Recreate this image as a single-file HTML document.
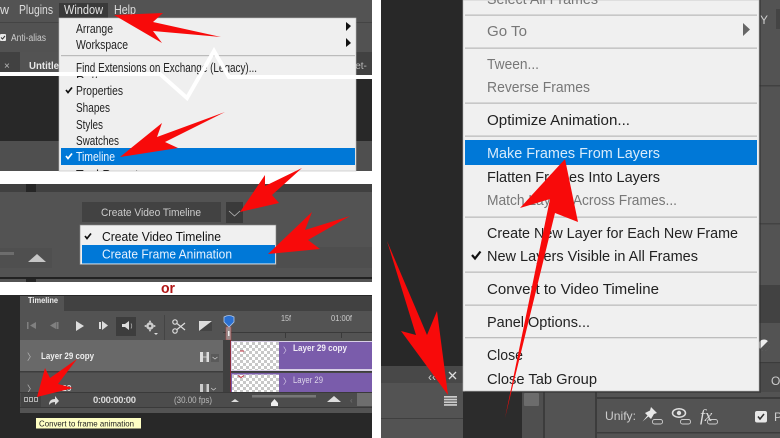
<!DOCTYPE html>
<html><head><meta charset="utf-8"><style>
html,body{margin:0;padding:0;background:#fff;width:780px;height:438px;overflow:hidden}
svg{display:block;filter:blur(.3px)}
text{font-family:"Liberation Sans",sans-serif}
</style></head><body>
<svg width="780" height="438" viewBox="0 0 780 438" xmlns="http://www.w3.org/2000/svg">
<defs>
<pattern id="ck" width="6" height="6" patternUnits="userSpaceOnUse"><rect width="6" height="6" fill="#fff"/><rect width="3" height="3" fill="#c8c8c8"/><rect x="3" y="3" width="3" height="3" fill="#c8c8c8"/></pattern>
<clipPath id="pat"><rect x="59" y="72" width="297" height="6"/></clipPath>
<clipPath id="tool"><rect x="59" y="165" width="297" height="6"/></clipPath>
</defs>
<rect width="780" height="438" fill="#fff"/>

<!-- TOP LEFT PANEL -->
<rect x="0" y="0" width="372" height="22" fill="#535353"/>
<rect x="0" y="22" width="372" height="30" fill="#525252"/>
<rect x="0" y="22" width="372" height="1" fill="#444"/>
<rect x="0" y="52" width="372" height="24" fill="#414141"/>
<rect x="20" y="52" width="39" height="24" fill="#535353"/>
<rect x="0" y="76" width="372" height="65" fill="#282828"/>
<rect x="0" y="141" width="372" height="30" fill="#4f4f4f"/>
<text x="0" y="14" font-size="12.5" fill="#ddd">w</text>
<text x="19" y="14" font-size="12.5" fill="#ddd" textLength="34" lengthAdjust="spacingAndGlyphs">Plugins</text>
<rect x="59" y="3" width="49" height="15" fill="#3a3a3a"/>
<text x="64" y="14" font-size="12.5" fill="#e4e4e4" textLength="39" lengthAdjust="spacingAndGlyphs">Window</text>
<text x="114" y="14" font-size="12.5" fill="#ddd" textLength="22" lengthAdjust="spacingAndGlyphs">Help</text>
<rect x="0" y="34" width="6" height="7" rx="1" fill="#e8e8e8"/>
<path d="M1 37.500 l1.500 1.500 l2.500-3" fill="none" stroke="#333" stroke-width="1"/>
<text x="11" y="41" font-size="10" fill="#ccc" textLength="35" lengthAdjust="spacingAndGlyphs">Anti-alias</text>
<text x="4" y="69" font-size="10" fill="#bbb">×</text>
<text x="29" y="69" font-size="10.5" font-weight="bold" fill="#e8e8e8" textLength="30" lengthAdjust="spacingAndGlyphs">Untitle</text>
<text x="353" y="69" font-size="10" fill="#bbb">let-</text>

<rect x="59" y="18" width="297" height="153" fill="#efefef"/>
<rect x="59" y="18" width="297" height="153" fill="none" stroke="#bbb" stroke-width=".6"/>
<g font-size="12.5" fill="#222">
<text x="76" y="33" textLength="37" lengthAdjust="spacingAndGlyphs">Arrange</text>
<text x="76" y="49" textLength="52" lengthAdjust="spacingAndGlyphs">Workspace</text>
<text x="76" y="72" textLength="181" lengthAdjust="spacingAndGlyphs">Find Extensions on Exchange (Legacy)...</text>
<text x="76" y="85" clip-path="url(#pat)">Patterns</text>
<text x="76" y="95" textLength="47" lengthAdjust="spacingAndGlyphs">Properties</text>
<text x="76" y="112" textLength="34" lengthAdjust="spacingAndGlyphs">Shapes</text>
<text x="76" y="129" textLength="27" lengthAdjust="spacingAndGlyphs">Styles</text>
<text x="76" y="145" textLength="43" lengthAdjust="spacingAndGlyphs">Swatches</text>
<text x="76" y="179" clip-path="url(#tool)">Tool Presets</text>
</g>
<polygon points="346,22 351,26 346,31" fill="#111"/>
<polygon points="346,38 351,43 346,47" fill="#111"/>
<rect x="61" y="55" width="294" height="1.2" fill="#bbb"/>
<rect x="61" y="148" width="294" height="17" fill="#0078d7"/>
<text x="76" y="161" font-size="12.5" fill="#eaf4ff" textLength="39" lengthAdjust="spacingAndGlyphs">Timeline</text>
<path d="M66 90 l2 2.5 l4-5" fill="none" stroke="#111" stroke-width="1.7"/>
<path d="M66 156 l2 2.5 l4-5" fill="none" stroke="#fff" stroke-width="1.7"/>

<!-- zigzag tear -->
<polyline points="0,74 160,74 187,98 214,51 229,77 372,77" fill="none" stroke="#fff" stroke-width="4"/>

<!-- MIDDLE LEFT PANEL -->
<rect x="0" y="184" width="372" height="98" fill="#535353"/>
<rect x="0" y="184" width="372" height="8" fill="#404040"/>
<rect x="26" y="184" width="10" height="8" fill="#262626"/>
<rect x="82" y="202" width="139" height="20" fill="#424242"/>
<text x="101" y="216" font-size="11" fill="#ccc" textLength="100" lengthAdjust="spacingAndGlyphs">Create Video Timeline</text>
<rect x="226" y="202" width="17" height="21" fill="#3a3a3a"/>
<path d="M229 211 l5.500 5 l5.500-5" fill="none" stroke="#bbb" stroke-width=".8"/>
<rect x="0" y="248" width="52" height="20" fill="#4f4f4f"/>
<rect x="276" y="247" width="96" height="21" fill="#4e4e4e"/>
<rect x="0" y="252" width="14" height="3" fill="#6d6d6d"/>
<polygon points="28,262 37,254 46,262" fill="#c6c6c6"/>
<rect x="0" y="277" width="372" height="2" fill="#222"/>
<rect x="26" y="279" width="10" height="3" fill="#262626"/>
<rect x="80" y="225" width="196" height="39.500" fill="#f0f0f0" stroke="#888" stroke-width=".6"/>
<rect x="82" y="245" width="193" height="18.500" fill="#0078d7"/>
<path d="M85 236 l2 2.500 l4-5" fill="none" stroke="#111" stroke-width="1.700"/>
<text x="102" y="241" font-size="12.5" fill="#111" textLength="119" lengthAdjust="spacingAndGlyphs">Create Video Timeline</text>
<text x="102" y="258.500" font-size="12.5" fill="#e6f2ff" textLength="130" lengthAdjust="spacingAndGlyphs">Create Frame Animation</text>

<text x="161" y="293" font-size="15" font-weight="bold" fill="#b01515" textLength="14" lengthAdjust="spacingAndGlyphs">or</text>

<!-- BOTTOM LEFT PANEL -->
<rect x="0" y="295" width="372" height="143" fill="#282828"/>
<rect x="20" y="296" width="352" height="117" fill="#535353"/>
<rect x="64" y="296" width="308" height="15" fill="#414141"/>
<text x="28" y="303" font-size="8" font-weight="bold" fill="#eee" textLength="30" lengthAdjust="spacingAndGlyphs">Timeline</text>
<rect x="116" y="317" width="20" height="19" fill="#3d3d3d"/>
<g fill="#808080">
<rect x="27" y="322" width="1.500" height="7"/><polygon points="36,322 30,325.500 36,329"/>
<polygon points="56,322 50,325.500 56,329"/><rect x="56.500" y="322" width="2" height="7"/>
</g>
<polygon points="76,321 84,326 76,331" fill="#ddd"/>
<rect x="99" y="322" width="2" height="7" fill="#ddd"/><polygon points="102,321 108,325.500 102,330" fill="#ddd"/>
<polygon points="122,324 125,324 129,321 129,330 125,327 122,327" fill="#ddd"/>
<path d="M131 323.500 q1.500 2.500 0 5" fill="none" stroke="#aaa" stroke-width=".8"/>
<circle cx="150" cy="326" r="3.800" fill="#ccc"/><circle cx="150" cy="326" r="1.300" fill="#535353"/>
<circle cx="150" cy="321.500" r="1" fill="#ccc"/><circle cx="150" cy="330.500" r="1" fill="#ccc"/><circle cx="145.500" cy="326" r="1" fill="#ccc"/><circle cx="154.500" cy="326" r="1" fill="#ccc"/>
<polygon points="154,333 158,333 156,335" fill="#ddd"/>
<rect x="164" y="315" width="1" height="25" fill="#444"/>
<g fill="none" stroke="#ddd" stroke-width="1.200"><circle cx="175" cy="322" r="2.200"/><circle cx="175" cy="331" r="2.200"/><path d="M177 323.500 L185 330 M177 329.500 L185 323"/></g>
<rect x="199" y="321" width="13" height="10" fill="#ddd"/><polygon points="212,321 212,331 199,331" fill="#444"/>
<!-- ruler -->
<rect x="223" y="332" width="149" height="1" fill="#3a3a3a"/>
<rect x="285" y="332" width="1" height="6" fill="#3a3a3a"/><rect x="341" y="332" width="1" height="6" fill="#3a3a3a"/>
<text x="281" y="321" font-size="8" fill="#ccc" textLength="10" lengthAdjust="spacingAndGlyphs">15f</text>
<text x="331" y="321" font-size="8" fill="#ccc" textLength="21" lengthAdjust="spacingAndGlyphs">01:00f</text>
<rect x="226" y="327" width="5" height="13" fill="#9a8a8a" stroke="#c04a4a" stroke-width=".5"/>
<rect x="228" y="331" width="1.500" height="5" fill="#eee"/>
<path d="M224 317 q5-3 10 0 v5 l-5 5 l-5-5 z" fill="#2a6fd0" stroke="#b0c8ea" stroke-width=".8"/>
<!-- layer rows -->
<rect x="20" y="340" width="203" height="31" fill="#696969"/>
<rect x="20" y="371" width="352" height="21" fill="#535353"/>
<rect x="20" y="371" width="352" height="1.500" fill="#3d3d3d"/>
<rect x="223" y="340" width="7" height="52" fill="#404040"/>
<rect x="230" y="340" width="1.200" height="52" fill="#8a2a3a"/>
<text x="27" y="360" font-size="9" fill="#bbb">〉</text>
<text x="41" y="359" font-size="9.500" font-weight="bold" fill="#eee" textLength="53" lengthAdjust="spacingAndGlyphs">Layer 29 copy</text>
<text x="27" y="392" font-size="9" fill="#bbb">〉</text>
<text x="62" y="391" font-size="8.500" font-weight="bold" fill="#ddd">29</text>
<rect x="200" y="352" width="9" height="10" fill="#ddd"/><rect x="203" y="352" width="3.500" height="10" fill="#777"/><path d="M203 357h3.500" stroke="#ddd" stroke-width=".8"/>
<rect x="211" y="354" width="8" height="8" fill="#5a5a5a"/><path d="M212.500 357 l2.500 2 l2.500-2" fill="none" stroke="#ccc" stroke-width=".7"/>
<rect x="200" y="384" width="9" height="8" fill="#ccc"/><rect x="203" y="384" width="3.500" height="8" fill="#666"/>
<path d="M211 388 l2.500 2 l2.500-2" fill="none" stroke="#ccc" stroke-width=".7"/>
<!-- clips -->
<rect x="231" y="341" width="141" height="30" fill="#d8cfe6"/>
<rect x="232" y="342" width="47" height="28" fill="url(#ck)"/>
<rect x="279" y="342" width="93" height="27" fill="#7a5cab"/>
<path d="M240 351 h4" stroke="#c03040" stroke-width="1"/>
<text x="283" y="353" font-size="8" fill="#d8d0e8">〉</text>
<text x="293" y="351" font-size="9.500" font-weight="bold" fill="#f0ecf6" textLength="54" lengthAdjust="spacingAndGlyphs">Layer 29 copy</text>
<rect x="231" y="373" width="141" height="19" fill="#7a5cab"/>
<rect x="232" y="374.500" width="47" height="17.500" fill="url(#ck)"/>
<path d="M238 375.500 l3 2 l3-2" fill="none" stroke="#c03040" stroke-width="1"/>
<text x="283" y="384" font-size="8" fill="#d8d0e8">〉</text>
<text x="293" y="383" font-size="9" fill="#ddd6ea" textLength="30" lengthAdjust="spacingAndGlyphs">Layer 29</text>
<!-- bottom bar -->
<rect x="20" y="392" width="352" height="15" fill="#4c4c4c"/>
<rect x="20" y="392" width="352" height="1" fill="#3a3a3a"/><rect x="20" y="407" width="352" height="1" fill="#3a3a3a"/>
<rect x="21" y="393" width="20" height="14" fill="#424242"/>
<g fill="none" stroke="#c8c8c8" stroke-width=".8"><rect x="24.500" y="397.500" width="3" height="4"/><rect x="29.500" y="397.500" width="3" height="4"/><rect x="34.500" y="397.500" width="3" height="4"/></g>
<path d="M49 405 q0-6 6-6 v-3 l4 5 l-4 4 v-3 q-4 0-6 3z" fill="#ddd"/>
<text x="93" y="403" font-size="9.500" font-weight="bold" fill="#ddd" textLength="43" lengthAdjust="spacing">0:00:00:00</text>
<text x="174" y="403" font-size="9.500" fill="#bbb" textLength="38" lengthAdjust="spacingAndGlyphs">(30.00 fps)</text>
<polygon points="231,402 235,399 239,402" fill="#ddd"/>
<rect x="252" y="395" width="64" height="2.500" fill="#777"/>
<polygon points="274.500,399 278,403 278,406 271,406 271,403" fill="#eee"/>
<polygon points="327,402 334,396 341,402" fill="#ddd"/>
<text x="350" y="403" font-size="8" fill="#777">‹</text>
<rect x="357" y="393" width="15" height="13" fill="#6e6e6e"/>
<!-- tooltip -->
<rect x="36" y="418" width="105" height="10.500" fill="#ffffc4"/>
<text x="39" y="426.500" font-size="8.500" fill="#222" textLength="95" lengthAdjust="spacingAndGlyphs">Convert to frame animation</text>

<!-- RIGHT PANEL -->
<rect x="381" y="0" width="399" height="438" fill="#535353"/>
<rect x="381" y="0" width="82" height="366" fill="#282828"/>
<rect x="381" y="366" width="82" height="17" fill="#484848"/>
<rect x="381" y="383" width="82" height="35" fill="#535353"/>
<rect x="381" y="418" width="82" height="1" fill="#3f3f3f"/>
<rect x="463" y="392" width="59" height="46" fill="#2c2c2c"/>
<rect x="522" y="392" width="21" height="46" fill="#4f4f4f"/>
<rect x="524" y="393" width="15" height="13" rx="1" fill="#6c6c6c"/>
<rect x="543" y="392" width="2" height="46" fill="#3c3c3c"/>
<rect x="595" y="392" width="2" height="46" fill="#3c3c3c"/>
<rect x="596" y="397" width="184" height="2" fill="#3c3c3c"/>
<rect x="596" y="432" width="184" height="1.500" fill="#3c3c3c"/>
<!-- right strip -->
<rect x="759" y="85" width="21" height="1.500" fill="#414141"/>
<rect x="759" y="223" width="21" height="1.500" fill="#434343"/>
<rect x="759" y="285" width="21" height="38" fill="#424242"/>
<rect x="759" y="362" width="21" height="1.500" fill="#3c3c3c"/>
<rect x="759" y="364" width="21" height="28" fill="#4a4a4a"/>
<rect x="776" y="9" width="4" height="20" fill="#444"/>
<text x="760" y="24" font-size="12" fill="#ccc">Y</text>
<text x="771" y="385" font-size="12" fill="#ccc">O</text>
<circle cx="764" cy="345" r="5.500" fill="#eee"/><path d="M760 349 L768 341 A5.500 5.500 0 0 1 760 349z" fill="#535353"/>

<!-- Unify row -->
<text x="605" y="420" font-size="12" fill="#ccc" textLength="31" lengthAdjust="spacingAndGlyphs">Unify:</text>
<path d="M651 407 l6 6 l-3 1 l-3 5 l-2.500-2.500 l-6 5 l5-6 l-2.500-2.500 l5-2.500z" fill="#e8e8e8"/>
<ellipse cx="679" cy="413" rx="6.500" ry="4.300" fill="none" stroke="#e0e0e0" stroke-width="1.500"/><circle cx="679" cy="413" r="2.200" fill="#e0e0e0"/>
<text x="700" y="421" font-size="17" font-style="italic" fill="#ddd" style="font-family:'Liberation Serif',serif">fx</text>
<g fill="none" stroke="#ccc" stroke-width=".9"><rect x="652.500" y="419.500" width="10" height="4.500" rx="2"/><rect x="680.500" y="419.500" width="10" height="4.500" rx="2"/><rect x="707.500" y="419.500" width="10" height="4.500" rx="2"/></g>
<rect x="755" y="411" width="12" height="11.500" rx="2" fill="#e8e8e8"/>
<path d="M758 416.500 l2 2.500 l4-5" fill="none" stroke="#333" stroke-width="1.500"/>
<text x="774" y="421" font-size="12" fill="#ccc">P</text>

<!-- panel controls -->
<text x="428" y="381" font-size="12" fill="#ccc">‹‹</text>
<path d="M449 372 l7 7 M456 372 l-7 7" stroke="#ddd" stroke-width="1.300"/>
<g fill="#ccc"><rect x="444" y="396" width="13" height="1.700"/><rect x="444" y="398.700" width="13" height="1.700"/><rect x="444" y="401.400" width="13" height="1.700"/><rect x="444" y="404.100" width="13" height="1.700"/></g>

<!-- big menu -->
<rect x="465" y="0" width="296" height="393" fill="#2a2a2a" opacity=".45"/>
<rect x="463" y="0" width="296" height="391" fill="#f0f0f0"/>
<rect x="463" y="0" width="296" height="391" fill="none" stroke="#b5b5b5" stroke-width=".6"/>
<g fill="#bdbdbd">
<rect x="465" y="14.500" width="292" height="1.300"/><rect x="465" y="47.500" width="292" height="1.300"/>
<rect x="465" y="102.500" width="292" height="1.300"/><rect x="465" y="135.500" width="292" height="1.300"/>
<rect x="465" y="216.500" width="292" height="1.300"/><rect x="465" y="271.500" width="292" height="1.300"/>
<rect x="465" y="304.500" width="292" height="1.300"/><rect x="465" y="337" width="292" height="1.300"/>
</g>
<rect x="465" y="140" width="292" height="25" fill="#0078d7"/>
<g font-size="15" fill="#777">
<text x="487" y="4" textLength="111" lengthAdjust="spacingAndGlyphs">Select All Frames</text>
<text x="487" y="36" textLength="40" lengthAdjust="spacingAndGlyphs">Go To</text>
<text x="487" y="69" textLength="52" lengthAdjust="spacingAndGlyphs">Tween...</text>
<text x="487" y="92" textLength="103" lengthAdjust="spacingAndGlyphs">Reverse Frames</text>
<text x="487" y="205" textLength="190" lengthAdjust="spacingAndGlyphs">Match Layers Across Frames...</text>
</g>
<polygon points="743,23 750,29.500 743,36" fill="#666"/>
<g font-size="15" fill="#222">
<text x="487" y="125" textLength="143" lengthAdjust="spacingAndGlyphs">Optimize Animation...</text>
<text x="487" y="182" textLength="173" lengthAdjust="spacingAndGlyphs">Flatten Frames Into Layers</text>
<text x="487" y="238" textLength="251" lengthAdjust="spacingAndGlyphs">Create New Layer for Each New Frame</text>
<text x="487" y="261" textLength="211" lengthAdjust="spacingAndGlyphs">New Layers Visible in All Frames</text>
<text x="487" y="294" textLength="172" lengthAdjust="spacingAndGlyphs">Convert to Video Timeline</text>
<text x="487" y="327" textLength="103" lengthAdjust="spacingAndGlyphs">Panel Options...</text>
<text x="487" y="360" textLength="36" lengthAdjust="spacingAndGlyphs">Close</text>
<text x="487" y="384" textLength="110" lengthAdjust="spacingAndGlyphs">Close Tab Group</text>
</g>
<text x="487" y="158" font-size="15" fill="#d8ebfb" textLength="173" lengthAdjust="spacingAndGlyphs">Make Frames From Layers</text>
<path d="M472 255 l3 3.500 l5.500-7" fill="none" stroke="#111" stroke-width="2.200"/>

<!-- RED ARROWS -->
<g fill="#f80a0a">
<polygon points="114,15 163,13 153,22 221,37 153,31 162,43"/>
<polygon points="120,157 162,123 157,137 225,112 165,142 178,148"/>
<polygon points="240,212 265,175 265,186 302,168 272,195 279,203"/>
<polygon points="268,254 312,212 305,230 350,216 308,240 320,249"/>
<polygon points="37,397 45,368 50,378 77,359 58,384 73,388"/>
<polygon points="565,159 520,208 550,199 505,418 555,213 578,222"/>
<polygon points="387,241 427,335 437,311 448,395 401,331 416,335"/>
</g>
</svg>
</body></html>
